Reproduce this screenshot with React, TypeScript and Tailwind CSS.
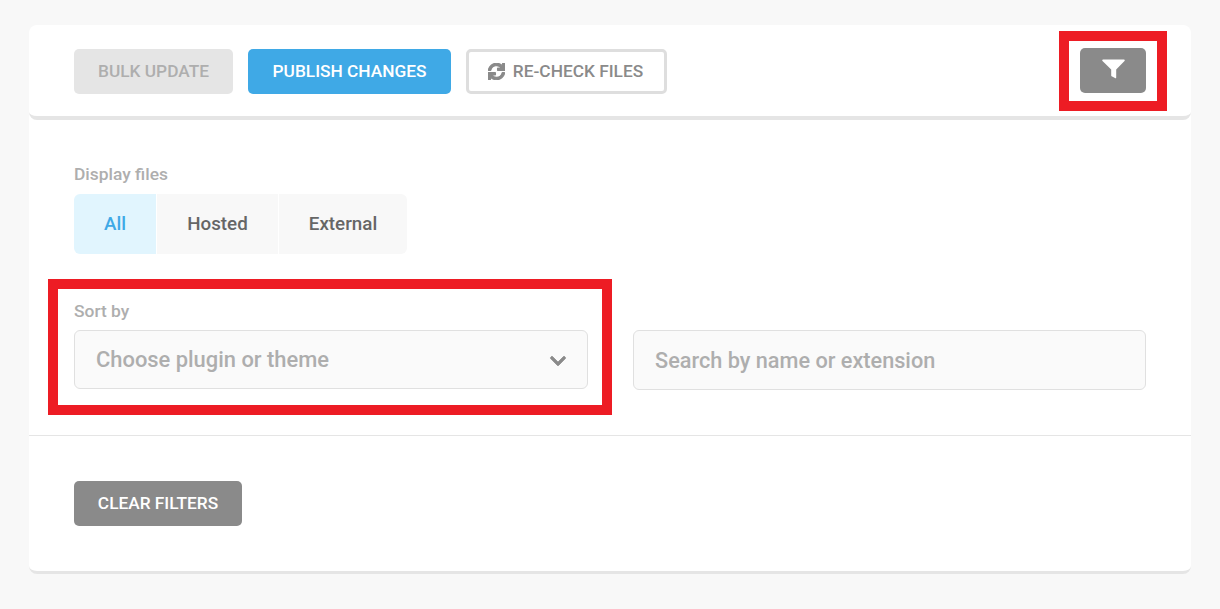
import { FaChevronDown, FaSync } from "react-icons/fa";

const App = () => {
  return (
    <div className="min-h-[609px] bg-[#f8f8f8] pt-[25px] px-[29px] font-['Roboto',sans-serif]">
      <div className="relative w-[1162px] rounded-[8px] bg-white border-b-[3px] border-[#e5e5e5]">
        {/* top bar */}
        <div className="h-[95px] rounded-[8px] border-b-[4px] border-[#e5e5e5] pl-[45px] pr-[45px] pt-[24px] flex justify-between">
          <div className="flex gap-[15px]">
            <button className="w-[159px] h-[45px] rounded-[5px] bg-[#e5e5e5] text-[#aeaeae] text-[17.3px] font-medium">
              BULK UPDATE
            </button>
            <button className="w-[203px] h-[45px] rounded-[5px] bg-[#3fa9e6] text-white text-[17.3px] font-medium">
              PUBLISH CHANGES
            </button>
            <button className="w-[201px] h-[45px] rounded-[5px] border-[3px] border-[#dedede] bg-white text-[#8a8a8a] text-[17.3px] font-medium flex items-center justify-center gap-[8px] pr-[2px]">
              <FaSync className="w-[17px] h-[17px] stroke-[36]" />
              RE-CHECK FILES
            </button>
          </div>
          <button className="w-[66px] h-[45px] -mt-px rounded-[5px] bg-[#8a8a8a] text-white flex items-center justify-center pb-[3px]">
            <svg viewBox="0 0 23 20" className="w-[23px] h-[20px]" fill="currentColor">
              <path d="M1 0.5H22a0.8 0.8 0 0 1 0.5 1.4L14.2 10.5V18.6a0.7 0.7 0 0 1-1.2 0.5L9.6 17.2a0.9 0.9 0 0 1-0.4-0.7V10.5L0.5 1.9A0.8 0.8 0 0 1 1 0.5Z" />
            </svg>
          </button>
        </div>

        {/* filters */}
        <div className="h-[316px] border-b border-[#e5e5e5] px-[45px] pt-[44px]">
          <div className="text-[17.4px] leading-[20px] font-medium text-[#aeaeae]">Display files</div>
          <div className="mt-[10px] flex w-[333px] h-[60px] rounded-[6px] overflow-hidden text-[18.8px] font-medium">
            <div className="w-[82px] bg-[#e1f5fe] text-[#3fa9e6] flex items-center justify-center">All</div>
            <div className="ml-px w-[121px] bg-[#f8f8f8] text-[#666666] flex items-center justify-center">Hosted</div>
            <div className="ml-px w-[128px] bg-[#f8f8f8] text-[#666666] flex items-center justify-center">External</div>
          </div>
          <div className="mt-[47px] flex gap-[45px]">
            <div className="w-[514px]">
              <div className="text-[17.4px] leading-[20px] font-medium text-[#aeaeae]">Sort by</div>
              <div className="mt-[9px] h-[59px] rounded-[6px] border border-[#e0e0e0] bg-[#fafafa] pl-[21px] pr-[20px] pt-[2px] flex items-center justify-between">
                <span className="text-[21.9px] font-medium text-[#aeaeae]">Choose plugin or theme</span>
                <FaChevronDown className="w-[18px] h-[18px] text-[#8a8a8a] stroke-[20]" />
              </div>
            </div>
            <div className="w-[513px] h-[60px] mt-[29px] rounded-[6px] border border-[#e0e0e0] bg-[#fafafa] pl-[21px] pt-[2px] flex items-center">
              <span className="text-[21.7px] font-medium text-[#aeaeae]">Search by name or extension</span>
            </div>
          </div>
        </div>

        {/* footer */}
        <div className="h-[135px] px-[45px] pt-[45px]">
          <button className="w-[168px] h-[45px] rounded-[5px] bg-[#8a8a8a] text-white text-[17.3px] font-medium">
            CLEAR FILTERS
          </button>
        </div>

        {/* red annotation boxes */}
        <div className="absolute left-[1030px] top-[6px] w-[108px] h-[80px] border-[10px] border-[#ed1c24]" />
        <div className="absolute left-[19px] top-[254px] w-[564px] h-[136px] border-[10px] border-[#ed1c24]" />
      </div>
    </div>
  );
};

export default App;
